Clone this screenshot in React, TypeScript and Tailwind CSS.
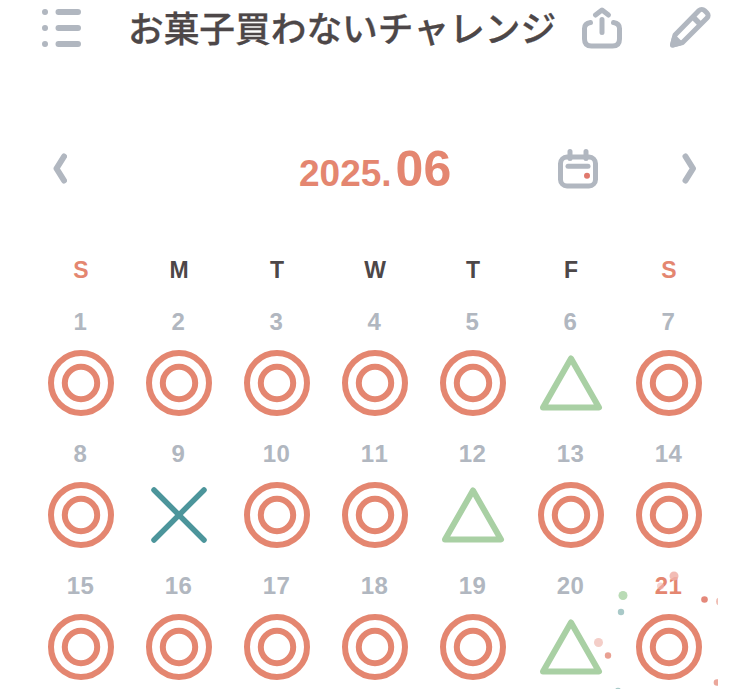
type Mark = "circle" | "triangle" | "cross";

const WEEKDAYS = ["S", "M", "T", "W", "T", "F", "S"];

const MARKS: Mark[] = [
    "circle", "circle", "circle", "circle", "circle", "triangle", "circle",
    "circle", "cross", "circle", "circle", "triangle", "circle", "circle",
    "circle", "circle", "circle", "circle", "circle", "triangle", "circle",
];

const TODAY = 21;

function ListIcon() {
    return (
        <svg width="40" height="40" viewBox="0 0 40 40" fill="none" stroke="#b1b7c0" strokeWidth="6" strokeLinecap="round">
            <path d="M4 4h.01M4 20h.01M4 36h.01M17.500 4H37M17.500 20H37M17.500 36H37" />
        </svg>
    );
}

function ShareIcon() {
    return (
        <svg width="42" height="44" viewBox="0 0 42 44" fill="none" stroke="#b1b7c0" strokeWidth="5" strokeLinecap="round" strokeLinejoin="round">
            <path d="M9.500 16.500C6 17 3.500 19 3.500 22.500V33C3.500 37.500 6 40 10.500 40H31.500C36 40 38.500 37.500 38.500 33V22.500C38.500 19 36 17 32.500 16.500" />
            <path d="M14.500 9L21 4L27.500 9M21 13.500V26.500" />
        </svg>
    );
}

function PencilIcon() {
    return (
        <svg width="44" height="44" viewBox="0 0 44 44" fill="none" stroke="#b1b7c0" strokeWidth="5" strokeLinejoin="round">
            <path d="M4.500 39L7 29L31 4.500C32.500 3 35 3 36.500 4.500L39 7C40.500 8.500 40.500 10.500 39 12L14.500 36.500Z" />
            <path d="M25 11L33 19" strokeWidth="5.500" />
            <path d="M4.500 39L6.500 31.500L12 37Z" fill="#b1b7c0" strokeWidth="5" />
        </svg>
    );
}

function CalendarIcon() {
    return (
        <svg width="40" height="40" viewBox="0 0 40 40" fill="none" stroke="#b1b7c0" strokeWidth="5" strokeLinecap="round">
            <rect x="2.500" y="8" width="35" height="29" rx="6.500" />
            <path d="M12 2.500V9.500M28 2.500V9.500" />
            <path d="M10 17.200H30" />
            <circle cx="29" cy="26.700" r="3" fill="#e0796d" stroke="none" />
        </svg>
    );
}

function Chevron({ d }: { d: string }) {
    return (
        <svg width="15" height="31" viewBox="0 0 15 31" fill="none" stroke="#b1b7c0" strokeWidth="6" strokeLinecap="round" strokeLinejoin="round">
            <path d={d} />
        </svg>
    );
}

function MarkIcon({ mark }: { mark: Mark }) {
    return (
        <svg width="68" height="68" viewBox="0 0 68 68" fill="none" strokeWidth="6" strokeLinecap="round" strokeLinejoin="round">
            {mark === "circle" && (
                <g stroke="#e48670">
                    <circle cx="34" cy="34" r="30" />
                    <circle cx="34" cy="34" r="16.200" />
                </g>
            )}
            {mark === "triangle" && <path d="M34 9.500L62 58.500H6Z" stroke="#a9d0a4" />}
            {mark === "cross" && <path d="M9 9L59 59M59 9L9 59" stroke="#4c959b" strokeWidth="5.500" />}
        </svg>
    );
}

function Confetti() {
    return (
        <svg className="absolute left-[570px] top-[560px]" width="148" height="129" viewBox="570 560 148 129">
            <circle cx="623" cy="595.500" r="4.500" fill="#b9dbb5" />
            <circle cx="621" cy="612" r="3.200" fill="#a9c9c8" />
            <circle cx="598.500" cy="642.500" r="4.500" fill="#f4cec8" />
            <circle cx="608" cy="655.500" r="3.200" fill="#e9a193" />
            <circle cx="674" cy="576" r="4.500" fill="#f0b0a8" fillOpacity=".85" />
            <circle cx="660.500" cy="586" r="3.500" fill="#f4b8b0" fillOpacity=".6" />
            <circle cx="704.500" cy="599.500" r="3.300" fill="#e4887a" />
            <circle cx="720" cy="601.500" r="4" fill="#f0beb4" />
            <circle cx="717" cy="682.500" r="3.300" fill="#eba79b" />
            <circle cx="618" cy="691" r="3.200" fill="#a9c9c8" />
        </svg>
    );
}

export default function App() {
    return (
        <div className="relative h-[689px] w-[750px] overflow-hidden bg-white font-['Liberation_Sans','Noto_Sans_CJK_JP',sans-serif] font-bold text-[#4d4748] [font-kerning:none]">
            <header className="flex h-14 items-center pl-[41px]">
                <ListIcon />
                <h1 className="ml-[47px] w-[453px] whitespace-nowrap pb-[3px] font-['Noto_Sans_CJK_JP',sans-serif] text-[35.7px] leading-[53px] font-medium [-webkit-text-stroke:0.3px_#4d4748]">
                    お菓子買わないチャレンジ
                </h1>
                <ShareIcon />
                <div className="ml-[45px]">
                    <PencilIcon />
                </div>
            </header>

            <div className="mt-[82px] flex h-[62px] items-center pl-[52px]">
                <div className="pb-0.5">
                    <Chevron d="M12 3.500L4.500 15.500L12 27.500" />
                </div>
                <div className="ml-[232px] flex w-[259px] items-baseline whitespace-nowrap pt-1 leading-[50px] text-[#e48670]">
                    <span className="text-[37px]">2025.</span>
                    <span className="ml-1 text-[50px]">06</span>
                </div>
                <CalendarIcon />
                <div className="ml-[84px] pb-0.5">
                    <Chevron d="M3.500 3.500L11 15.500L3.500 27.500" />
                </div>
            </div>

            <div className="mt-[56px] grid grid-cols-7 px-8 text-center text-[23px] leading-7">
                {WEEKDAYS.map((day, i) => (
                    <div key={i} className={i === 0 || i === 6 ? "text-[#e48670]" : ""}>
                        {day}
                    </div>
                ))}
            </div>

            <div className="mt-6 grid grid-cols-7 px-8">
                {MARKS.map((mark, i) => (
                    <div key={i} className="flex h-[132px] flex-col items-center">
                        <span className={`pr-px text-2xl leading-7 tracking-[0.5px] ${i + 1 === TODAY ? "text-[#e48670]" : "text-[#b1b7c0]"}`}>
                            {i + 1}
                        </span>
                        <div className="mt-[13px]">
                            <MarkIcon mark={mark} />
                        </div>
                    </div>
                ))}
            </div>

            <Confetti />
        </div>
    );
}
